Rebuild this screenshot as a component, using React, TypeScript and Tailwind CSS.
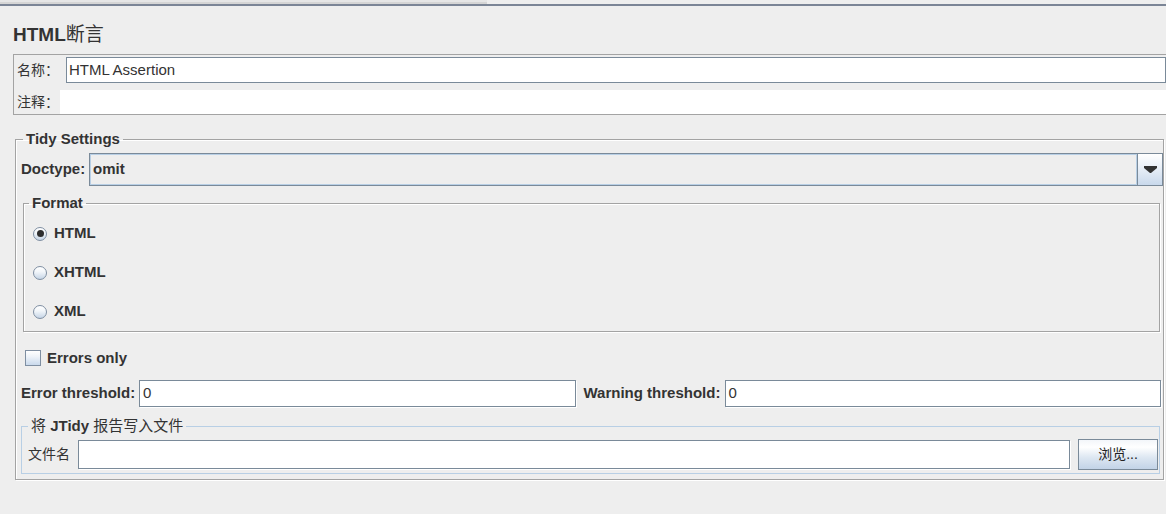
import React from "react";

function Radio({ checked }: { checked?: boolean }) {
  return (
    <span className="relative w-[14px] h-[14px] rounded-full border border-[#7f8fa2] bg-[linear-gradient(to_bottom,#ffffff,#f2f6fa_40%,#c6d5e6)] flex items-center justify-center shrink-0">
      {checked && <span className="w-[7px] h-[7px] rounded-full bg-[#2e2e2e]" />}
    </span>
  );
}

function TextField({ value, className }: { value?: string; className: string }) {
  return (
    <div className={`bg-white border border-[#7a8a99] shadow-[1px_1px_0_#ffffff] flex items-center pl-[3px] ${className}`}>
      {value}
    </div>
  );
}

export default function App() {
  return (
    <div className="w-[1166px] h-[514px] bg-[#eeeeee] overflow-hidden text-[#333333] text-[15px] font-['Liberation_Sans','Noto_Sans_CJK_SC',sans-serif] flex flex-col">
      {/* top strip */}
      <div className="flex flex-col">
        <div className="w-[487px] h-[4px] bg-[#e6e6e6] border-b-2 border-[#d5d5d5]" />
        <div className="h-[2px] bg-[#7b8596]" />
      </div>

      <h1 className="mt-[18px] ml-[13px] text-[19px] leading-[22px]">
        <span className="font-bold">HTML</span>
        <span>断言</span>
      </h1>

      {/* name / comment panel */}
      <div className="mt-[8px] ml-[13px] border-l border-t border-b border-[#a3a3a3] pt-[2px] flex flex-col">
        <div className="flex h-[26px] items-center">
          <span className="w-[52px] shrink-0 pl-[3px] text-[14px] whitespace-nowrap">名称：</span>
          <div className="flex-1 h-full bg-white border border-[#7a8a99] flex items-center pl-[2px]">HTML Assertion</div>
        </div>
        <div className="flex h-[24px] items-center mt-[7px]">
          <span className="w-[46px] shrink-0 pl-[3px] text-[14px] whitespace-nowrap">注释：</span>
          <div className="flex-1 h-full bg-white" />
        </div>
      </div>

      {/* Tidy Settings */}
      <fieldset className="mt-[15px] ml-[15px] mr-[2px] min-w-0 border border-[#a3a3a3] shadow-[inset_1px_1px_0_#ffffff,1px_1px_0_#ffffff] pb-[5px] flex flex-col">
        <legend className="ml-[7px] px-[3px] font-bold leading-[18px]">Tidy Settings</legend>

        <div className="mt-[5px] h-[33px] flex items-center pl-[5px]">
          <span className="font-bold w-[62px] shrink-0">Doctype:</span>
          <div className="ml-[6px] flex-1 h-full border border-[#7a8a99] flex">
            <div className="flex-1 border border-[#b8cfe5] bg-[#eeeeee] flex items-center pl-[2px] font-bold">omit</div>
            <div className="w-[25px] border-l border-[#7a8a99] bg-[linear-gradient(to_bottom,#ffffff,#eef3f9_35%,#c9d9ec)] flex items-center justify-center">
              <svg width="13" height="7" viewBox="0 0 13 7">
                <polygon points="0,0 13,0 13,2 7,7 6,7 0,2" fill="#333333" />
              </svg>
            </div>
          </div>
        </div>

        {/* Format */}
        <fieldset className="mt-[8px] ml-[7px] mr-[3px] min-w-0 border border-[#a3a3a3] shadow-[inset_1px_1px_0_#ffffff,1px_1px_0_#ffffff] pt-[2px] flex flex-col">
          <legend className="ml-[5px] px-[3px] font-bold leading-[18px]">Format</legend>
          {[
            { label: "HTML", checked: true },
            { label: "XHTML", checked: false },
            { label: "XML", checked: false },
          ].map((r) => (
            <div key={r.label} className="h-[39px] flex items-center pl-[9px]">
              <Radio checked={r.checked} />
              <span className="ml-[7px] font-bold">{r.label}</span>
            </div>
          ))}
        </fieldset>

        <div className="mt-[16px] h-[20px] flex items-center pl-[9px]">
          <span className="w-[16px] h-[16px] border border-[#7f8fa2] bg-[linear-gradient(to_bottom,#ffffff,#eef3f9_40%,#c9d9ec)] shrink-0" />
          <span className="ml-[6px] font-bold">Errors only</span>
        </div>

        <div className="mt-[12px] h-[27px] flex items-center pl-[5px] pr-[2px]">
          <span className="w-[118px] shrink-0 font-bold whitespace-nowrap">Error threshold:</span>
          <TextField value="0" className="flex-1 h-full" />
          <span className="ml-[8px] w-[141px] shrink-0 font-bold whitespace-nowrap">Warning threshold:</span>
          <TextField value="0" className="flex-1 h-full" />
        </div>

        {/* JTidy report */}
        <fieldset className="mt-[10px] ml-[5px] mr-[3px] min-w-0 border border-[#b8cfe5] pb-[3px] flex flex-col">
          <legend className="ml-[6px] px-[3px] leading-[18px]">
            将 <span className="font-bold">JTidy</span> 报告写入文件
          </legend>
          <div className="mt-[4px] h-[31px] flex items-center pl-[6px] pr-[1px]">
            <span className="w-[50px] shrink-0 text-[14px]">文件名</span>
            <div className="flex-1 h-[29px] bg-white border border-[#7a8a99] shadow-[1px_1px_0_#ffffff]" />
            <button className="ml-[8px] w-[80px] h-[31px] border border-[#7a8a99] bg-[linear-gradient(to_bottom,#f3f6fa,#ffffff_25%,#dde7f2_60%,#c2d3e7)] text-[14px] text-[#222] flex items-center justify-center">
              浏览...
            </button>
          </div>
        </fieldset>
      </fieldset>
    </div>
  );
}
